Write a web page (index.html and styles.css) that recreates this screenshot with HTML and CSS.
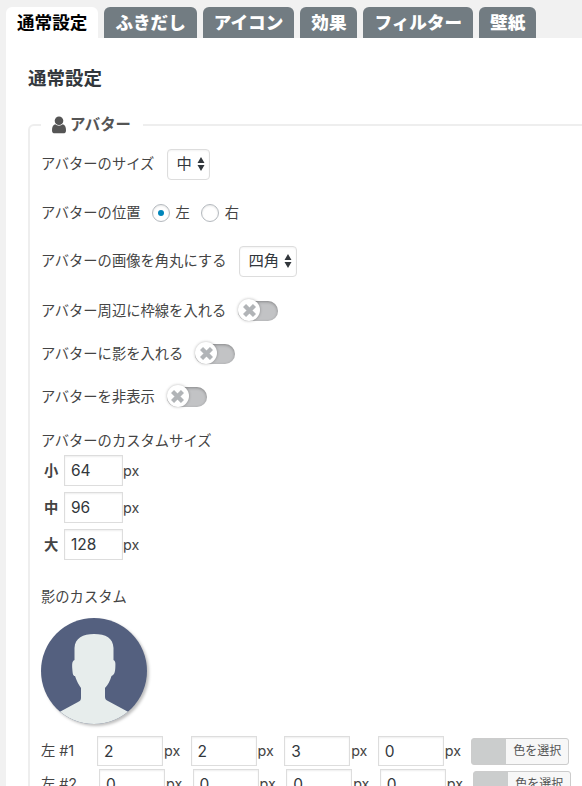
FILE: index.html
```html
<!DOCTYPE html>
<html lang="ja">
<head>
    <meta charset="UTF-8">
    <meta name="viewport" content="width=device-width, initial-scale=1.0">
    <title>通常設定</title>
    <link rel="stylesheet" href="styles.css">
</head>
<body>
    <nav class="tabs">
        <a class="tab active">通常設定</a>
        <a class="tab">ふきだし</a>
        <a class="tab">アイコン</a>
        <a class="tab">効果</a>
        <a class="tab">フィルター</a>
        <a class="tab">壁紙</a>
    </nav>

    <main class="panel">
        <h1>通常設定</h1>
        <fieldset>
            <legend>
                <svg class="user-icon" viewBox="0 0 14 18"><circle cx="7" cy="4.8" r="4.3"/><path d="M3.2 8.2C1 8.8 0 11 0 14.2C0 16.5 1 17.3 3 17.3H11C13 17.3 14 16.5 14 14.2C14 11 13 8.8 10.8 8.2C8.8 10.1 5.2 10.1 3.2 8.2Z"/></svg>
                <span>アバター</span>
            </legend>

            <div class="row row-size">
                <span>アバターのサイズ</span>
                <div class="select">中<svg viewBox="0 0 8 14"><path d="M4 0L7.5 6H.5ZM4 14L.5 8H7.5Z"/></svg></div>
            </div>
            <div class="row row-position">
                <span>アバターの位置</span>
                <input type="radio" name="position" id="left" checked>
                <label for="left">左</label>
                <input type="radio" name="position" id="right">
                <label for="right">右</label>
            </div>
            <div class="row row-shape">
                <span>アバターの画像を角丸にする</span>
                <div class="select">四角<svg viewBox="0 0 8 14"><path d="M4 0L7.5 6H.5ZM4 14L.5 8H7.5Z"/></svg></div>
            </div>

            <div class="row row-toggle">
                <span>アバター周辺に枠線を入れる</span>
                <div class="toggle"><div class="knob"><svg viewBox="0 0 12 12"><path d="M1.4 1.4L10.6 10.6M10.6 1.4L1.4 10.6"/></svg></div></div>
            </div>
            <div class="row row-toggle">
                <span>アバターに影を入れる</span>
                <div class="toggle"><div class="knob"><svg viewBox="0 0 12 12"><path d="M1.4 1.4L10.6 10.6M10.6 1.4L1.4 10.6"/></svg></div></div>
            </div>
            <div class="row row-toggle">
                <span>アバターを非表示</span>
                <div class="toggle"><div class="knob"><svg viewBox="0 0 12 12"><path d="M1.4 1.4L10.6 10.6M10.6 1.4L1.4 10.6"/></svg></div></div>
            </div>

            <div class="caption">アバターのカスタムサイズ</div>
            <div class="size-row"><b>小</b><input type="text" value="64"><span>px</span></div>
            <div class="size-row"><b>中</b><input type="text" value="96"><span>px</span></div>
            <div class="size-row"><b>大</b><input type="text" value="128"><span>px</span></div>

            <div class="caption caption-shadow">影のカスタム</div>
            <svg class="avatar" viewBox="0 0 106 106">
                <path fill="#e7edec" d="M53 16C42 16 34 20 33.5 30V42C31 43 31 46 31.3 51C31.7 56 32 58 34 58C36 64 38 67 40 70V80C40 82 39 83 37 84L0 104V106H106V104L67 83C65 82 64 81 64 79V70C67 67 69 63 70.5 58C73 57 74 55 74.3 50C74.6 45 74.5 43 72.5 42V30C72 20 65 16 53 16Z"/>
            </svg>

            <div class="shadow-row">
                <span class="name">左 #1</span>
                <div class="unit"><input type="text" value="2">px</div>
                <div class="unit"><input type="text" value="2">px</div>
                <div class="unit"><input type="text" value="3">px</div>
                <div class="unit"><input type="text" value="0">px</div>
                <button type="button" class="color-button"><span>色を選択</span></button>
            </div>
            <div class="shadow-row">
                <span class="name name-wide">左 #2</span>
                <div class="unit"><input type="text" value="0">px</div>
                <div class="unit"><input type="text" value="0">px</div>
                <div class="unit"><input type="text" value="0">px</div>
                <div class="unit"><input type="text" value="0">px</div>
                <button type="button" class="color-button"><span>色を選択</span></button>
            </div>
        </fieldset>
    </main>
</body>
</html>
```
FILE: styles.css
```css
* {
    box-sizing: border-box;
}
body {
    margin: 0;
    padding: 7px 0 0 6px;
    height: 786px;
    overflow: hidden;
    background: #f1f1f1;
    color: #444;
    font-family: Inter, "Noto Sans CJK JP", sans-serif;
    font-size: 14.3px;
    line-height: 20px;
    white-space: nowrap;
}
.tabs {
    display: flex;
    gap: 6px;
}
.tab {
    height: 31px;
    padding: 0 11px;
    border-radius: 6px 6px 0 0;
    background: #727c82;
    color: #fff;
    font-size: 17.6px;
    font-weight: 900;
    line-height: 31px;
}
.tab.active {
    background: #fff;
    color: #000;
    font-weight: bold;
}
.panel {
    height: 748px;
    padding: 28px 0 0 22px;
    background: #fff;
    overflow: hidden;
}
h1 {
    margin: 0;
    color: #32373c;
    font-size: 18.5px;
    line-height: 24px;
}
fieldset {
    height: 800px;
    margin: 23px -20px 0 0;
    padding: 2px 0 0 11px;
    border: 2px solid #eee;
    border-radius: 6px;
}
legend {
    display: flex;
    align-items: center;
    gap: 4px;
    height: 24px;
    padding: 0 12px 0 11px;
    color: #555;
    font-size: 15.4px;
    font-weight: bold;
}
.user-icon {
    width: 14px;
    height: 18px;
    fill: #555;
}
.row {
    display: flex;
    align-items: center;
}
.row-size {
    height: 50px;
}
.row-position {
    height: 48px;
}
.row-shape {
    height: 48px;
    margin-bottom: 4px;
}
.row-toggle {
    height: 43px;
}
.select {
    display: flex;
    align-items: center;
    gap: 5px;
    height: 31px;
    margin-left: 13px;
    padding: 0 4px 0 8px;
    border: 1px solid #ddd;
    border-radius: 4px;
    background: #fff;
    box-shadow: inset 0 1px 2px rgba(0, 0, 0, 0.05);
    color: #32373c;
    font-size: 15.3px;
}
.select svg {
    width: 8px;
    height: 14px;
    fill: #32373c;
}
input[type="radio"] {
    appearance: none;
    display: grid;
    place-content: center;
    width: 18px;
    height: 18px;
    margin: 0 6px 0 11px;
    border: 1px solid #b4b9be;
    border-radius: 50%;
    background: #fff;
    box-shadow: inset 0 1px 2px rgba(0, 0, 0, 0.1);
}
input[type="radio"]:checked::before {
    content: "";
    width: 6px;
    height: 6px;
    border-radius: 50%;
    background: #0085ba;
}
.toggle {
    display: flex;
    align-items: center;
    width: 40px;
    height: 20px;
    margin-left: 12px;
    border-radius: 10px;
    background: #c2c3c5;
    box-shadow: inset 0 1px 3px rgba(0, 0, 0, 0.3);
}
.knob {
    display: flex;
    align-items: center;
    justify-content: center;
    width: 22px;
    height: 22px;
    margin-top: -1px;
    border-radius: 50%;
    background: #fff;
    box-shadow: 0 0 3px rgba(0, 0, 0, 0.3);
}
.knob svg {
    width: 13px;
    height: 13px;
    stroke: #b1b4b7;
    stroke-width: 4;
}
.caption {
    height: 24px;
    margin-top: 10px;
    line-height: 26px;
}
.caption-shadow {
    height: 30px;
    margin-top: 19px;
    line-height: 30px;
}
.size-row {
    display: flex;
    align-items: center;
    height: 37px;
    padding-left: 3px;
}
.size-row b {
    width: 20px;
}
input[type="text"] {
    width: 59px;
    height: 31px;
    padding: 0 6px;
    border: 1px solid #ddd;
    background: #fff;
    box-shadow: inset 0 1px 2px rgba(0, 0, 0, 0.07);
    color: #32373c;
    font-family: inherit;
    font-size: 15.5px;
}
.avatar {
    display: block;
    width: 106px;
    height: 106px;
    margin: 6px 0 12px;
    border-radius: 50%;
    background: #54607f;
    box-shadow: 2px 2px 3px rgba(0, 0, 0, 0.25);
}
.shadow-row {
    display: flex;
    align-items: center;
    height: 30px;
    margin-bottom: 3px;
}
.name {
    width: 56px;
}
.name-wide {
    width: 58px;
}
.unit {
    display: flex;
    align-items: center;
    gap: 1px;
    width: 93.6px;
}
.unit input[type="text"] {
    width: 66px;
    height: 30px;
}
.color-button {
    width: 98px;
    height: 27px;
    padding: 0 0 0 34px;
    border: 1px solid #ccc;
    border-radius: 3px;
    background: #cbcdcd;
    color: #555;
    font-family: inherit;
    font-size: 12px;
}
.color-button span {
    display: block;
    height: 25px;
    border-radius: 0 2px 2px 0;
    background: #f7f7f7;
    line-height: 24px;
}
```
